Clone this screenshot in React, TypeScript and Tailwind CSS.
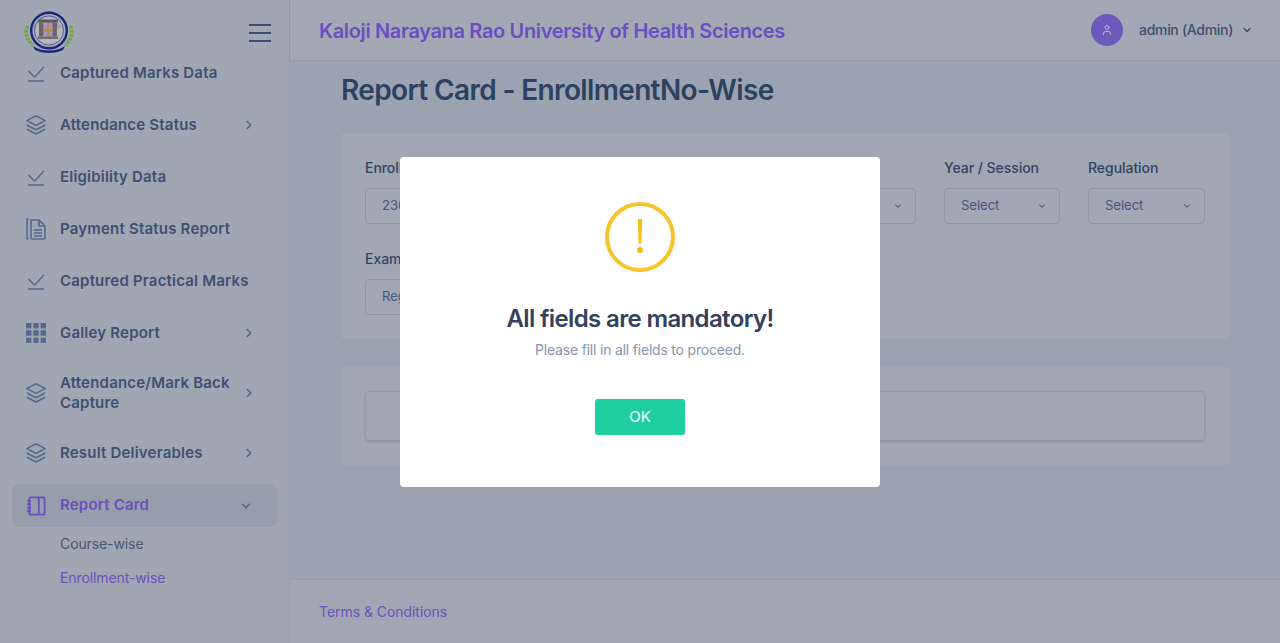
import React from "react";
import { ChevronDown, ChevronRight, User } from "lucide-react";

const CheckIcon = () => (
  <svg width="20" height="20" viewBox="0 0 20 20" fill="none" stroke="#56688b" strokeWidth="1.5">
    <path d="M2.4 7.8 8.7 14.2 18 3.8" />
    <path d="M2 18h16" />
  </svg>
);

const LayersIcon = () => (
  <svg width="20" height="20" viewBox="0 0 20 20" fill="none" stroke="#56688b" strokeWidth="1.6" strokeLinejoin="round">
    <path d="M10 .8 19.2 5.6 10 10.4.8 5.6Z" />
    <path d="M.8 10 10 14.8 19.2 10" />
    <path d="M.8 14.2 10 19 19.2 14.2" />
  </svg>
);

const GridIcon = () => (
  <svg width="20" height="20" viewBox="0 0 20 20" fill="#56688b">
    <rect x="0" y="0" width="5.4" height="5.4" />
    <rect x="7.3" y="0" width="5.4" height="5.4" />
    <rect x="14.6" y="0" width="5.4" height="5.4" />
    <rect x="0" y="7.3" width="5.4" height="5.4" />
    <rect x="7.3" y="7.3" width="5.4" height="5.4" />
    <rect x="14.6" y="7.3" width="5.4" height="5.4" />
    <rect x="0" y="14.6" width="5.4" height="5.4" />
    <rect x="7.3" y="14.6" width="5.4" height="5.4" />
    <rect x="14.6" y="14.6" width="5.4" height="5.4" />
  </svg>
);

const DocIcon = () => (
  <svg width="20" height="22" viewBox="0 0 20 22" fill="none" stroke="#56688b" strokeWidth="1.6" strokeLinejoin="round">
    <path d="M2.6 1H1v20h1.6" />
    <path d="M5 2h8l6 6v12a1 1 0 0 1-1 1H6a1 1 0 0 1-1-1Z" />
    <path d="M13 2v6h6" />
    <path d="M8 12h8M8 15h8M8 18h8" />
  </svg>
);

const NotebookIcon = () => (
  <svg width="20" height="20" viewBox="0 0 20 20" fill="none" stroke="#6a50bd" strokeWidth="1.8" strokeLinejoin="round">
    <rect x="3.4" y="1.4" width="15.2" height="17.2" rx="1.2" />
    <path d="M12.8 1.4v17.2" />
    <path d="M1 4.8h4M1 8.2h4M1 11.8h4M1 15.2h4" />
  </svg>
);

const Logo = () => (
  <svg width="50" height="44" viewBox="0 0 50 44">
    <path d="M3.5 15c-3 7-1 14 5.5 19" fill="none" stroke="#76a34c" strokeWidth="3.6" strokeDasharray="3 1" />
    <path d="M46.5 15c3 7 1 14-5.5 19" fill="none" stroke="#76a34c" strokeWidth="3.6" strokeDasharray="3 1" />
    <circle cx="25" cy="19.5" r="17.8" fill="#a9adb8" stroke="#1b2679" strokeWidth="2.4" />
    <circle cx="25" cy="19.5" r="14.6" fill="#b4b6be" stroke="#39418c" strokeWidth=".8" />
    <path d="M22 9l10 1 6 6-6 3-1 7-7 2-8-8Z" fill="#b48fb6" />
    <rect x="14" y="8.5" width="20" height="3" fill="#5a5a60" />
    <rect x="15" y="11.5" width="4.4" height="14" fill="#66666d" />
    <rect x="28.6" y="11.5" width="4.4" height="14" fill="#66666d" />
    <path d="M24 12v15M19 17c2 4 8 4 10 0" fill="none" stroke="#a98a3a" strokeWidth="1.4" />
    <rect x="14" y="25.5" width="20" height="2.4" fill="#6d6d74" />
    <path d="M9 35c8 6 24 6 32 0l-2 4c-8 4-20 4-28 0Z" fill="#1b2679" />
  </svg>
);

type NavItem = {
  label: string;
  icon: React.ReactNode;
  arrow?: boolean;
  tall?: boolean;
};

const navItems: NavItem[] = [
  { label: "Captured Marks Data", icon: <CheckIcon /> },
  { label: "Attendance Status", icon: <LayersIcon />, arrow: true },
  { label: "Eligibility Data", icon: <CheckIcon /> },
  { label: "Payment Status Report", icon: <DocIcon /> },
  { label: "Captured Practical Marks", icon: <CheckIcon /> },
  { label: "Galley Report", icon: <GridIcon />, arrow: true },
  { label: "Attendance/Mark Back Capture", icon: <LayersIcon />, arrow: true, tall: true },
  { label: "Result Deliverables", icon: <LayersIcon />, arrow: true },
];

const Sidebar = () => (
  <aside className="flex h-full w-[290px] shrink-0 flex-col overflow-hidden border-r border-[#979dab] bg-[#a1a6b3]">
    <div className="relative z-10 flex h-[60px] shrink-0 items-start justify-between pl-6 pr-[18px] pt-[11px]">
      <Logo />
      <div className="mt-[13px] flex w-[22px] flex-col gap-[6px]">
        <span className="h-[2px] bg-[#3f4f6e]" />
        <span className="h-[2px] bg-[#3f4f6e]" />
        <span className="h-[2px] bg-[#3f4f6e]" />
      </div>
    </div>
    <nav className="-mt-[13px] px-3">
      {navItems.map((item) => (
        <div
          key={item.label}
          className={`flex items-center pl-[14px] ${item.tall ? "h-[68px]" : "h-[52px]"}`}
        >
          <span className="flex w-[34px] shrink-0 items-center">{item.icon}</span>
          <span className="w-[190px] shrink-0 text-[15px] font-semibold leading-[20px] tracking-[0.2px] text-[#40506f]">
            {item.label}
          </span>
          {item.arrow && <ChevronRight size={14} strokeWidth={3} color="#56688b" className="-ml-[8px]" />}
        </div>
      ))}
      <div className="mt-[5px] flex h-[43px] items-center rounded-lg bg-[#969dab] pl-[14px]">
        <span className="flex w-[34px] shrink-0 items-center">
          <NotebookIcon />
        </span>
        <span className="w-[179px] text-[15px] font-semibold tracking-[0.2px] text-[#6a50bd]">Report Card</span>
        <ChevronDown size={14} strokeWidth={3} color="#5d6b87" />
      </div>
      <div className="flex flex-col pl-12 text-[14px] tracking-[-0.1px]">
        <span className="mt-[7px] leading-[20px] text-[#4a5670]">Course-wise</span>
        <span className="mt-[14px] leading-[20px] text-[#6a50bd]">Enrollment-wise</span>
      </div>
    </nav>
  </aside>
);

const Header = () => (
  <header className="flex h-[61px] shrink-0 items-center justify-between border-b border-[#979dab] bg-[#a2a8b4] pl-[29px] pr-[27px] shadow-sm">
    <h1 className="pt-[2px] text-[20px] font-semibold tracking-[-0.35px] text-[#6a4ec2]">
      Kaloji Narayana Rao University of Health Sciences
    </h1>
    <div className="flex items-center">
      <span className="flex h-8 w-8 items-center justify-center rounded-full bg-[#6d59bb]">
        <User size={12} color="#bdb5dc" />
      </span>
      <span className="ml-4 pb-[2px] text-[14px] font-medium tracking-[-0.3px] text-[#3f4f6e]">admin (Admin)</span>
      <ChevronDown size={12} strokeWidth={3} color="#3f4f6e" className="ml-2" />
    </div>
  </header>
);

const Field = ({ label, value }: { label: string; value: string }) => (
  <div>
    <label className="mb-[10px] block text-[14px] font-medium leading-[20px] tracking-[-0.05px] text-[#34435f]">
      {label}
    </label>
    <div className="flex h-[36px] items-center justify-between rounded border border-[#8f96a8] pl-4 pr-3 text-[13px] text-[#45557a]">
      <span>{value}</span>
      <ChevronDown size={10} strokeWidth={2.5} color="#45557a" />
    </div>
  </div>
);

const Content = () => (
  <div className="flex-1 overflow-hidden bg-[#9ca3b0] px-[51px] pt-[11px]">
    <h2 className="text-[28px] font-semibold leading-[36px] tracking-[-0.65px] text-[#2d4160]">
      Report Card - EnrollmentNo-Wise
    </h2>
    <section className="mt-[25px] grid grid-cols-[1fr_1fr_116px_116px_117px] gap-x-7 gap-y-[25px] rounded bg-[#a1a7b3] px-6 pb-6 pt-[25px]">
      <Field label="Enrollment No" value="2300000000" />
      <Field label="Course" value="Select" />
      <Field label="Exam" value="Select" />
      <Field label="Year / Session" value="Select" />
      <Field label="Regulation" value="Select" />
      <Field label="Exam Type" value="Regular" />
    </section>
    <section className="mt-7 rounded bg-[#a1a7b3] p-6">
      <div className="h-[50px] rounded border border-[#8f96a8] shadow-sm" />
    </section>
  </div>
);

const Footer = () => (
  <footer className="flex h-[64px] shrink-0 items-center border-t border-[#979dab] bg-[#a1a7b3] pl-[29px] text-[14px] tracking-[-0.05px] text-[#6a50bd]">
    Terms &amp; Conditions
  </footer>
);

const AlertModal = () => (
  <div className="fixed inset-0 flex items-start justify-center pt-[157px]">
    <div className="flex h-[330px] w-[480px] flex-col items-center rounded bg-white pt-[45px]">
      <div className="flex h-[70px] w-[70px] items-center justify-center rounded-full border-4 border-[#f7c42b]">
        <svg width="8" height="36" viewBox="0 0 8 36" fill="#f9bc0b">
          <path d="M1.9 0h4.2l-.7 24.5H2.6Z" />
          <circle cx="4" cy="31" r="3" />
        </svg>
      </div>
      <h3 className="mt-[30px] text-[24px] font-semibold leading-[34px] tracking-[-0.64px] text-[#33415c]">
        All fields are mandatory!
      </h3>
      <p className="mt-[4px] text-[14px] leading-[20px] tracking-[-0.2px] text-[#8795ad]">
        Please fill in all fields to proceed.
      </p>
      <button className="mt-[39px] h-[36px] w-[90px] rounded-[3px] bg-[#1fcf9f] text-[15px] text-white">OK</button>
    </div>
  </div>
);

export default function App() {
  return (
    <div className="flex h-screen w-full overflow-hidden font-['Inter',sans-serif]">
      <Sidebar />
      <main className="flex min-w-0 flex-1 flex-col">
        <Header />
        <Content />
        <Footer />
      </main>
      <AlertModal />
    </div>
  );
}
